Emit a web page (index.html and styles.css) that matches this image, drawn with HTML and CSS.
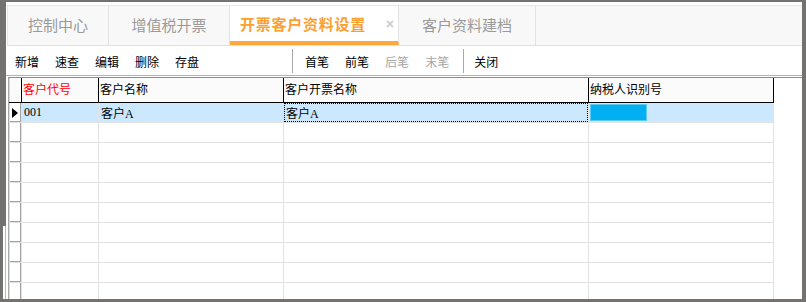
FILE: index.html
```html
<!DOCTYPE html>
<html lang="zh-CN">
<head>
  <meta charset="UTF-8" />
  <title>开票客户资料设置</title>
  <link rel="stylesheet" href="styles.css">
</head>
<body>
  <div class="window">
    <div class="tabs">
      <div class="tab tab-home">控制中心</div>
      <div class="tab tab-vat">增值税开票</div>
      <div class="tab tab-active">
        <span>开票客户资料设置</span>
        <svg class="tab-close" width="8" height="8" viewBox="0 0 8 8">
          <path d="M1 1 L7 7 M7 1 L1 7" stroke="#d2d2d2" stroke-width="2"/>
        </svg>
      </div>
      <div class="tab tab-archive">客户资料建档</div>
    </div>

    <div class="toolbar">
      <span class="tool">新增</span>
      <span class="tool">速查</span>
      <span class="tool">编辑</span>
      <span class="tool">删除</span>
      <span class="tool">存盘</span>
      <span class="sep sep-nav"></span>
      <span class="tool">首笔</span>
      <span class="tool">前笔</span>
      <span class="tool disabled">后笔</span>
      <span class="tool disabled">末笔</span>
      <span class="sep sep-close"></span>
      <span class="tool">关闭</span>
    </div>

    <div class="grid">
      <div class="hd corner"></div>
      <div class="hd key">客户代号</div>
      <div class="hd">客户名称</div>
      <div class="hd">客户开票名称</div>
      <div class="hd">纳税人识别号</div>

      <div class="rh"><span class="pointer"></span></div>
      <div class="cell sel">001</div>
      <div class="cell sel">客户A</div>
      <div class="cell sel"><div class="focus">客户A</div></div>
      <div class="cell sel"><span class="taxbox"></span></div>

      <div class="rh"></div><div class="cell"></div><div class="cell"></div><div class="cell"></div><div class="cell"></div>
      <div class="rh"></div><div class="cell"></div><div class="cell"></div><div class="cell"></div><div class="cell"></div>
      <div class="rh"></div><div class="cell"></div><div class="cell"></div><div class="cell"></div><div class="cell"></div>
      <div class="rh"></div><div class="cell"></div><div class="cell"></div><div class="cell"></div><div class="cell"></div>
      <div class="rh"></div><div class="cell"></div><div class="cell"></div><div class="cell"></div><div class="cell"></div>
      <div class="rh"></div><div class="cell"></div><div class="cell"></div><div class="cell"></div><div class="cell"></div>
      <div class="rh"></div><div class="cell"></div><div class="cell"></div><div class="cell"></div><div class="cell"></div>
      <div class="rh"></div><div class="cell"></div><div class="cell"></div><div class="cell"></div><div class="cell"></div>
      <div class="rh"></div><div class="cell"></div><div class="cell"></div><div class="cell"></div><div class="cell"></div>
    </div>
  </div>
</body>
</html>
```

FILE: styles.css
```css
html, body {
  margin: 0;
  height: 302px;
  overflow: hidden;
}

body {
  background: #747171;
  font-family: "Noto Sans CJK SC", sans-serif;
  position: relative;
}

/* narrow splitter strip on the left frame */
body::after {
  content: "";
  position: absolute;
  left: 3px;
  top: 226px;
  bottom: 3px;
  width: 2px;
  background: #fff;
  border-right: 1px solid #b8b8b8;
}

.window {
  margin: 2px 4px 0 6px;
  height: 297px;
  background: #fff;
  overflow: hidden;
}

.tabs {
  display: flex;
  height: 39px;
  margin: 3px 0 0 1px;
  background: #f8f8f8;
  border-top: 1px solid #e8e8e8;
  border-bottom: 1px solid #e0e0e0;
  border-left: 1px solid #e6e6e6;
}

.tab {
  box-sizing: border-box;
  display: flex;
  align-items: center;
  justify-content: center;
  padding-bottom: 2px;
  border-right: 1px solid #e2e2e2;
  font-size: 15px;
  color: #9a9a9a;
}

.tab-home { width: 101px; }
.tab-vat { width: 121px; }
.tab-archive { width: 137px; }

.tab-active {
  width: 169px;
  justify-content: flex-start;
  padding: 0 4px 0 10px;
  background: #fff;
  border-bottom: 4px solid #ffa63c;
  color: #fb9f30;
  font-weight: bold;
  letter-spacing: 0.75px;
}

.tab-close {
  margin-left: auto;
}

.toolbar {
  display: flex;
  align-items: center;
  height: 29px;
  padding-left: 1px;
  border-bottom: 1px solid #b4b4b4;
  font-size: 12px;
  color: #000;
}

.tool {
  padding: 1px 8px 0;
}

.tool.disabled {
  color: #a6a6a6;
}

.sep {
  width: 1px;
  height: 24px;
  background: #a8a8a8;
}

.sep-nav { margin: 0 4px 0 85px; }
.sep-close { margin: 0 2px 0 6px; }

.grid {
  display: grid;
  grid-template-columns: 13px 77px 185px 305px 185px;
  grid-template-rows: 25px;
  grid-auto-rows: 20px;
  margin: 1px 0 0 2px;
  border-top: 1px solid #8c8c8c;
  border-left: 1px solid #a8a8a8;
  font-family: "Liberation Serif", "Noto Sans CJK SC", serif;
  font-size: 12px;
}

.hd, .cell, .rh {
  box-sizing: border-box;
  display: flex;
  align-items: center;
  overflow: hidden;
  white-space: nowrap;
}

.hd {
  padding: 0 0 4px 1px;
  background: #fbfbfb;
  border-right: 1px solid #000;
  border-bottom: 1px solid #000;
  font-family: "Noto Sans CJK SC", sans-serif;
}

.hd.corner {
  box-shadow: inset 1px 0 0 #d8d8d8;
}

.hd.key {
  color: #f00;
}

.rh {
  background: #fff;
  border-right: 1px solid #e2e2e2;
  border-bottom: 1px solid #e2e2e2;
  box-shadow: inset 1px 0 0 #dcdcdc, inset -1px -1px 0 #a4a4a4;
}

.pointer {
  width: 0;
  height: 0;
  margin-left: 3px;
  border-left: 6px solid #000;
  border-top: 5px solid transparent;
  border-bottom: 5px solid transparent;
}

.cell {
  padding-left: 2px;
  border-right: 1px solid #e2e2e2;
  border-bottom: 1px solid #e2e2e2;
  color: #000;
}

.cell.sel {
  background: #cce8ff;
}

.cell:has(.focus) {
  padding-left: 0;
}

.focus {
  box-sizing: border-box;
  display: flex;
  align-items: center;
  width: 100%;
  height: 100%;
  padding-left: 1px;
  border: 1px dotted #000;
}

.taxbox {
  width: 55px;
  height: 15px;
  margin-left: 0;
  background: #00b0f0;
  box-shadow: 0 0 0 1px #5ccaf5;
}
```
